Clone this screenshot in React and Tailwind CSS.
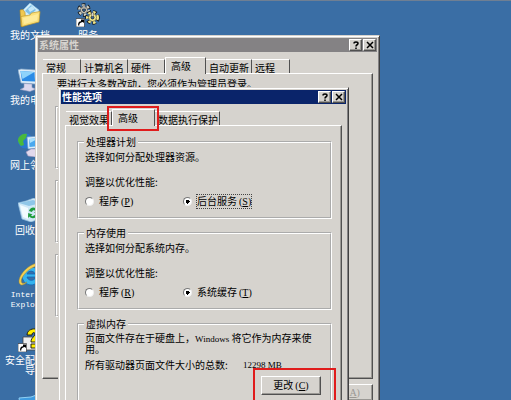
import React from "react";

const raised =
  "border border-t-white border-l-white border-r-[#505050] border-b-[#505050] shadow-[inset_-1px_-1px_0_#9a9894]";

function Shortcut() {
  return (
    <g>
      <path d="M0 15.500h8.500V24H0z" fill="#fff" stroke="#222" strokeWidth=".6" />
      <path d="M2 22.500c0-3 1-4 3-4.200V16.500l3 .1v3.400l-1.200-1C4 19.500 3.200 20.500 3.300 22.500z" fill="#000" />
    </g>
  );
}

function FolderIcon() {
  return (
    <svg viewBox="0 0 24 24" className="h-6 w-6" aria-hidden="true">
      <path d="M4 8l8-8 9 7-1 6-14 3z" fill="#d3eefa" stroke="#8cc4e2" strokeWidth=".6" />
      <path d="M7 8l6-6 5 5-6 5z" fill="#7fbfe6" />
      <path d="M10 6l4-3 3 3-5 3z" fill="#c3e8fa" />
      <path d="M2 7l3-.5 2 3 1 13-5 1z" fill="#f0c850" stroke="#b58d20" strokeWidth=".6" />
      <path d="M3 13.500l9-1.500 1.500-2L22 8.500 21 19 4 23.500z" fill="#fbe07a" stroke="#c49b2a" strokeWidth=".7" />
      <path d="M5 15l15-4-1 6.500L6 21z" fill="#fff0a8" opacity=".7" />
    </svg>
  );
}

function Gear({ x, y, r, color }) {
  return (
    <g transform={`translate(${x} ${y})`}>
      <circle r={r} fill="none" stroke="#111" strokeWidth="4.500" strokeDasharray="3 1.700" />
      <circle r={r} fill="none" stroke={color} strokeWidth="3" strokeDasharray="2.400 2.300" />
      <circle r={r - 1} fill={color} stroke="#222" strokeWidth=".5" />
      <circle r="1.500" fill="#3a6ea5" stroke="#111" strokeWidth=".7" />
      <path d="M-.8-5h1.600v4H-.8z" fill="#eee" stroke="#222" strokeWidth=".4" />
    </g>
  );
}

function ServicesIcon() {
  return (
    <svg viewBox="0 0 24 24" className="h-6 w-6" aria-hidden="true">
      <Gear x={8} y={7} r={4.500} color="#d0d0c4" />
      <Gear x={16.5} y={14.500} r={5} color="#f0e68c" />
      <Shortcut />
    </svg>
  );
}

function ComputerIcon() {
  return (
    <svg viewBox="0 0 24 24" className="h-6 w-6" aria-hidden="true">
      <path d="M17 7l7 1v14l-7 1z" fill="#c9c7e4" stroke="#8a88b0" strokeWidth=".6" />
      <path d="M0 2l3-1 15 1 1 12-2 2-14-1z" fill="#dcecf8" stroke="#86a8c9" strokeWidth=".7" />
      <path d="M2.500 3l14 1 .5 9.500L4 13z" fill="#2b8be6" />
      <path d="M2.500 3l14 1-12 7z" fill="#8ed3fb" />
      <path d="M6 15.500l8 .5v3.500l4 1.500-6 2.500-10-2 4-2z" fill="#dcd8ee" stroke="#8a99bd" strokeWidth=".6" />
    </svg>
  );
}

function NetworkIcon() {
  return (
    <svg viewBox="0 0 24 24" className="h-6 w-6" aria-hidden="true">
      <circle cx="7.500" cy="8" r="7.500" fill="#2878d0" />
      <path d="M1 4c2-3 6-4 8-3l-1 4-3 3 1 4-3 1C0 10-1 7 1 4z" fill="#49b93c" />
      <path d="M9 4l13-1 1 12-13 1z" fill="#dbeefb" stroke="#6a9ccc" strokeWidth=".7" />
      <path d="M11 6l10-1 .5 8-10 1z" fill="#4aa8ee" />
      <path d="M11 6l10-1-9 5z" fill="#a9e0fd" />
      <path d="M8 19l5-3h7l3 3-6 5-7-1z" fill="#e0d8ec" stroke="#9a90b8" strokeWidth=".6" />
    </svg>
  );
}

function RecycleIcon() {
  return (
    <svg viewBox="0 0 24 24" className="h-6 w-6" aria-hidden="true">
      <path d="M0 5l8-2 8-3 8 5-3 16-8 3-9-3z" fill="#cfe8f7" stroke="#8fbcdc" strokeWidth=".7" />
      <path d="M1 5l10 3 12-3-8-3z" fill="#8fc6e8" />
      <path d="M2 7l8 3v11l-5-2z" fill="#f2fbff" />
      <path d="M11 13c1-4 6-5 8-1l1.500-1-.5 5-4-1.500 1.500-1c-1-2-3-1.500-3.500.5z" fill="#1f9c3b" />
      <path d="M19 17c-1 4-6 4-7.500 1.500L10 20l.2-5 4.300 1.500-1.500 1c1 1 3 1 3.500-.5z" fill="#1f9c3b" />
    </svg>
  );
}

function ExplorerIcon() {
  return (
    <svg viewBox="0 0 24 24" className="h-6 w-6" aria-hidden="true">
      <path
        d="M13 4a9 9 0 1 0 8.500 12h-5a4.500 4.500 0 0 1-7.500-2h13A9 9 0 0 0 13 4zm-4 7a4.200 4.200 0 0 1 8 0z"
        fill="#35b3ee"
        stroke="#1266b5"
        strokeWidth=".8"
        fillRule="evenodd"
      />
      <path d="M3 22C-3 19 5 5 16 1c5-1.500 7 1 5 5 .5-3-2-3.500-5-2C8 7 1 17 4 20c1 .8 3 0 5-1-2 2-4.500 3.500-6 3z" fill="#f4cf52" stroke="#9d8730" strokeWidth=".5" />
    </svg>
  );
}

function WizardIcon() {
  return (
    <svg viewBox="0 0 24 24" className="h-6 w-6" aria-hidden="true">
      <path d="M5 9h9l4 3v10H5z" fill="#eee" stroke="#444" strokeWidth=".8" />
      <path d="M9 7c0-8 14-8 14-1 0 4-5 4-5 8h-5c0-5 4-5 4-8 0-2-3-2-3 1zM13 16h5v4h-5z" fill="#ffee00" stroke="#111" strokeWidth=".9" />
      <Shortcut />
    </svg>
  );
}

function DiscIcon() {
  return (
    <svg viewBox="0 0 24 24" className="h-6 w-6" aria-hidden="true">
      <path d="M1 5l12-1 8-3v16H3z" fill="#3f9be0" stroke="#8fd0f5" />
    </svg>
  );
}

const desktopItems = [
  { label: "我的文档", Icon: FolderIcon },
  { label: "我的电脑", Icon: ComputerIcon },
  { label: "网上邻居", Icon: NetworkIcon },
  { label: "回收站", Icon: RecycleIcon },
  { label: "Internet Explorer", Icon: ExplorerIcon, mono: true },
  { label: "安全配置向导", Icon: WizardIcon },
  { label: "", Icon: DiscIcon },
];

function DesktopItem({ label, Icon, mono }) {
  return (
    <li className="h-[65px] w-[58px] shrink-0">
      <button className="flex w-full flex-col items-center gap-[3px] text-white">
        <Icon />
        <span className={`w-[50px] text-center leading-[10px] ${mono ? "font-['Liberation_Mono',monospace] text-[8px]" : ""}`}>
          {label}
        </span>
      </button>
    </li>
  );
}

function TitleBar({ title, active }) {
  return (
    <header
      className={`flex h-[14px] items-center gap-px px-px ${
        active ? "bg-[#0a246a] text-white" : "bg-[#848284] text-[#d6d3ce]"
      }`}
    >
      <h2 className="flex-1 font-bold">{title}</h2>
      <button aria-label="帮助" className={`flex h-3 w-[13px] items-center justify-center bg-[#d6d3ce] text-black ${raised}`}>
        <svg viewBox="0 0 8 8" className="h-2 w-2" aria-hidden="true">
          <path d="M2 2.500C2 .5 6 .5 6 2.500 6 4 4 3.500 4 5.500M4 6.500v1.500" fill="none" stroke="currentColor" strokeWidth="1.500" />
        </svg>
      </button>
      <button aria-label="关闭" className={`flex h-3 w-[13px] items-center justify-center bg-[#d6d3ce] text-black ${raised}`}>
        <svg viewBox="0 0 8 8" className="h-2 w-2" aria-hidden="true">
          <path d="M1 1l6 6M7 1L1 7" stroke="currentColor" strokeWidth="1.500" />
        </svg>
      </button>
    </header>
  );
}

function Tab({ width, selected, mark, children }) {
  return (
    <button
      role="tab"
      aria-selected={!!selected}
      className={`relative border-t border-r border-t-white border-r-[#505050] text-left whitespace-nowrap ${width} ${
        selected ? "z-10 -mb-px h-[17px] border-l border-l-white bg-[#d6d3ce] pb-px pl-[5px]" : "h-[14px] pt-[2px] pl-[3px]"
      }`}
    >
      {children}
      {mark && <span className="absolute -top-[4px] -right-[5px] -bottom-[5px] -left-[6px] border-2 border-[#e01c1c]" />}
    </button>
  );
}

function Radio({ name, label, hotkey, checked, focused }) {
  return (
    <label className="flex items-center gap-[5px]">
      <input
        type="radio"
        name={name}
        defaultChecked={checked}
        className="h-[9px] w-[9px] shrink-0 appearance-none rounded-full border border-t-[#777] border-r-[#eee] border-b-[#eee] border-l-[#777] bg-white checked:bg-[radial-gradient(circle,#000_2px,#fff_2px)]"
      />
      <span className={focused ? "outline-1 outline-dotted outline-[#444]" : ""}>
        {label}
        <Hotkey letter={hotkey} />
      </span>
    </label>
  );
}

function Hotkey({ letter }) {
  return (
    <span className="pl-[2px] font-['Liberation_Serif',serif] text-[10px]">
      (<u>{letter}</u>)
    </span>
  );
}

function Group({ title, children }) {
  return (
    <fieldset className="min-w-0 border-2 border-white px-[6px] [border-style:groove]">
      <legend className="-ml-px px-[2px] leading-3">{title}</legend>
      <div className="pt-[3px] leading-3">{children}</div>
    </fieldset>
  );
}

function ChoiceGroup({ title, text, name, options }) {
  return (
    <Group title={title}>
      <p>{text}</p>
      <p className="mt-[13px]">调整以优化性能:</p>
      <div className="mt-[7px] grid grid-cols-[98px_1fr] pb-[9px]">
        {options.map((o) => (
          <Radio key={o.label} name={name} {...o} />
        ))}
      </div>
    </Group>
  );
}

function SystemProperties() {
  return (
    <section
      aria-label="系统属性"
      className="absolute top-[34px] left-[35px] w-[345px] border border-t-[#d6d3ce] border-r-[#404040] border-b-[#404040] border-l-[#d6d3ce] bg-[#d6d3ce] p-[2px] shadow-[inset_1px_1px_0_#fff,inset_-1px_-1px_0_#848284]"
    >
      <TitleBar title="系统属性" />
      <div className="px-1 pt-[5px] pb-3">
        <div role="tablist" className="flex items-end pl-px">
          <Tab width="w-[38px]">常规</Tab>
          <Tab width="w-[47px]">计算机名</Tab>
          <Tab width="w-[37px]">硬件</Tab>
          <Tab width="w-[41px]" selected>高级</Tab>
          <Tab width="w-[46px]">自动更新</Tab>
          <Tab width="w-[38px]">远程</Tab>
        </div>
        <div className={`px-3 pt-1 pb-[61px] ${raised}`}>
          <p className="pl-[2px] leading-3">要进行大多数改动，您必须作为管理员登录。</p>
          <div className="mt-4 mr-4 flex flex-col gap-[11px]">
            <div className="h-[63px] border-2 border-white [border-style:groove]" />
            <div className="h-[63px] border-2 border-white [border-style:groove]" />
            <div className="h-[63px] border-2 border-white [border-style:groove]" />
          </div>
        </div>
        <div className="mt-[5px] flex justify-end">
          <button disabled className={`h-[17px] w-[62px] text-[#9a9894] ${raised}`}>
            应用
            <Hotkey letter="A" />
          </button>
        </div>
      </div>
    </section>
  );
}

function PerformanceOptions() {
  return (
    <section
      aria-label="性能选项"
      className="absolute top-[86px] left-[58px] z-20 w-[291px] border border-t-[#d6d3ce] border-r-[#404040] border-b-[#404040] border-l-[#d6d3ce] bg-[#d6d3ce] p-[2px] shadow-[inset_1px_1px_0_#fff,inset_-1px_-1px_0_#848284]"
    >
      <TitleBar title="性能选项" active />
      <div className="px-1 pt-[5px] pb-8">
        <div role="tablist" className="flex items-end pl-px">
          <Tab width="w-[46px]">视觉效果</Tab>
          <Tab width="w-[43px]" selected mark>高级</Tab>
          <Tab width="w-[65px]">数据执行保护</Tab>
        </div>
        <div className={`flex flex-col gap-2 pt-[10px] pr-[9px] pb-4 pl-[11px] ${raised}`}>
          <ChoiceGroup
            title="处理器计划"
            text="选择如何分配处理器资源。"
            name="cpu"
            options={[
              { label: "程序", hotkey: "P" },
              { label: "后台服务", hotkey: "S", checked: true, focused: true },
            ]}
          />
          <ChoiceGroup
            title="内存使用"
            text="选择如何分配系统内存。"
            name="memory"
            options={[
              { label: "程序", hotkey: "R" },
              { label: "系统缓存", hotkey: "T", checked: true },
            ]}
          />
          <Group title="虚拟内存">
            <p className="leading-[10px]">
              页面文件存在于硬盘上，
              <span className="font-['Liberation_Serif',serif] text-[9px]">Windows </span>
              将它作为内存来使用。
            </p>
            <dl className="mt-[5px] grid grid-cols-[158px_1fr]">
              <dt>所有驱动器页面文件大小的总数:</dt>
              <dd className="font-['Liberation_Serif',serif] text-[9px] leading-3">12298 MB</dd>
            </dl>
            <div className="mt-[5px] mb-2 flex justify-end pr-[3px]">
              <button className={`relative h-[19px] w-[60px] ${raised}`}>
                更改
                <Hotkey letter="C" />
                <span className="absolute -top-[9px] -right-[16px] -bottom-[20px] -left-[9px] border-2 border-[#e01c1c]" />
              </button>
            </div>
          </Group>
        </div>
      </div>
    </section>
  );
}

export default function App() {
  return (
    <main className="relative h-screen overflow-hidden border-t border-[#6f7f93] bg-[#3a6ea5] font-['Noto_Sans_CJK_SC',sans-serif] text-[10px] leading-3 text-black">
      <div className="flex pt-[2px] pl-px">
        <ul className="flex flex-col">
          {desktopItems.map((item) => (
            <DesktopItem key={item.label} {...item} />
          ))}
        </ul>
        <ul>
          <DesktopItem label="服务" Icon={ServicesIcon} />
        </ul>
      </div>
      <SystemProperties />
      <PerformanceOptions />
    </main>
  );
}
